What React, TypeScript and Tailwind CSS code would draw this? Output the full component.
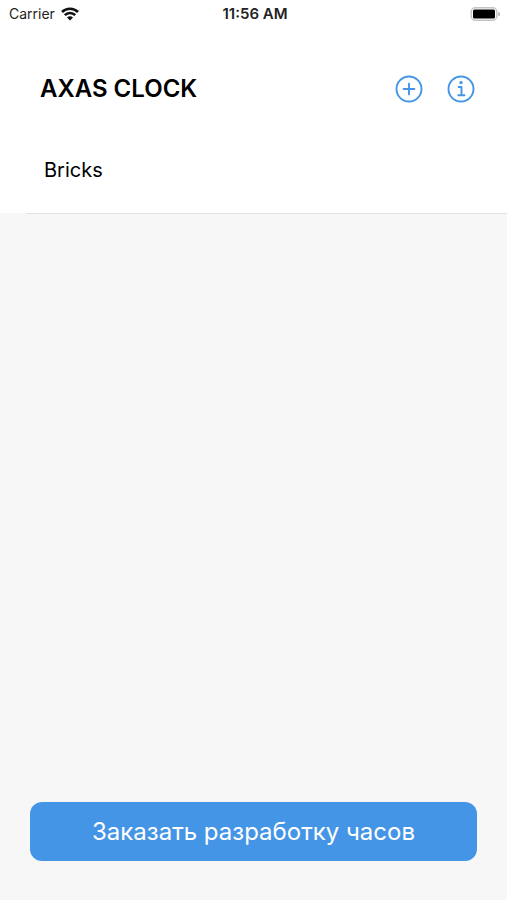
import * as React from "react";

const clocks = ["Bricks"];

function WifiIcon() {
  return (
    <svg viewBox="0 0 18 14" className="h-[14px] w-[18px]" aria-hidden="true">
      <g fill="none" stroke="#111" strokeWidth="2.6">
        <path d="M1 5a11.3 11.3 0 0 1 16 0" />
        <path d="M3.8 8.2a7.3 7.3 0 0 1 10.4 0" />
      </g>
      <path d="M9 13.4 6 10.4a4.2 4.2 0 0 1 6 0z" fill="#111" />
    </svg>
  );
}

function BatteryIcon() {
  return (
    <svg viewBox="0 0 31 15" className="h-[15px] w-[31px]" aria-hidden="true">
      <rect x="1.2" y="0.7" width="25.6" height="12.6" rx="4" fill="#fff" stroke="#c4c4c4" strokeWidth="1.4" />
      <rect x="3" y="2.5" width="22" height="9" rx="1.5" fill="#000" />
      <path d="M28.4 4.7c2.2.8 2.2 3.8 0 4.6z" fill="#b0b0b0" />
    </svg>
  );
}

function AddIcon() {
  return (
    <svg viewBox="0 0 28 28" className="size-7" fill="none" stroke="currentColor" strokeWidth="1.9" strokeLinecap="round" aria-hidden="true">
      <circle cx="14" cy="14" r="12.5" />
      <path d="M14 8.6v10.8M8.6 14h10.8" />
    </svg>
  );
}

function InfoIcon() {
  return (
    <svg viewBox="0 0 28 28" className="size-7" fill="none" stroke="currentColor" strokeWidth="1.9" strokeLinecap="round" strokeLinejoin="round" aria-hidden="true">
      <circle cx="14" cy="14" r="12.5" />
      <path d="M11.6 12h2.9v8M11.3 20.2h6.2" />
      <circle cx="14" cy="7.6" r="1.7" fill="currentColor" stroke="none" />
    </svg>
  );
}

function StatusBar() {
  return (
    <div className="flex h-7 items-center bg-white pr-[6px] pl-[9px] text-[14px] leading-5 text-[#222]">
      <div className="flex flex-1 items-center gap-[6px]">
        <span>Carrier</span>
        <WifiIcon />
      </div>
      <span className="text-[15px] font-semibold">11:56 AM</span>
      <div className="flex flex-1 justify-end">
        <BatteryIcon />
      </div>
    </div>
  );
}

export default function App() {
  return (
    <div className="flex min-h-screen flex-col bg-[#f7f7f8] font-['Inter','Liberation_Sans',sans-serif] text-black">
      <StatusBar />

      <header className="flex h-[98px] items-center justify-between bg-white pt-6 pr-8 pl-10">
        <h1 className="text-[24px] leading-8 font-semibold">AXAS CLOCK</h1>
        <div className="flex gap-6 text-[#4595e6]">
          <button type="button" aria-label="Add clock">
            <AddIcon />
          </button>
          <button type="button" aria-label="Info">
            <InfoIcon />
          </button>
        </div>
      </header>

      <ul className="bg-white">
        {clocks.map((name) => (
          <li key={name}>
            <button type="button" className="flex h-[87px] w-full items-center px-11 text-[20px] leading-7">
              {name}
            </button>
            <div className="flex bg-[#f7f7f8]">
              <div className="ml-[26px] h-px flex-1 bg-[#e2e2e4]" />
            </div>
          </li>
        ))}
      </ul>

      <footer className="mt-auto px-[30px] pb-[39px]">
        <button
          type="button"
          className="min-h-[59px] w-full rounded-xl bg-[#4595e6] px-4 text-[24px] leading-8 text-white"
        >
          Заказать разработку часов
        </button>
      </footer>
    </div>
  );
}
